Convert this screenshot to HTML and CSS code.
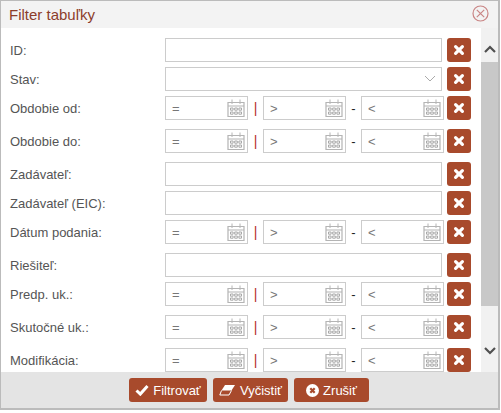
FILE: index.html
```html
<!DOCTYPE html>
<html lang="sk">
<head>
  <meta charset="UTF-8">
  <title>Filter tabuľky</title>
  <link rel="stylesheet" href="styles.css">
</head>
<body>
  <svg class="defs" width="0" height="0">
    <symbol id="ico-cal" viewBox="0 0 18 18">
      <path d="M1 3.5h16v14H1z M1 7h16" fill="none" stroke="#b4b4b4" stroke-width="1.2"/>
      <path d="M5 0.5v4.5 M13 0.5v4.5" fill="none" stroke="#b4b4b4" stroke-width="1"/>
      <path d="M3.5 9h2.6v2.2H3.5z M7.7 9h2.6v2.2H7.7z M11.9 9h2.6v2.2h-2.6z M3.5 13h2.6v2.2H3.5z M7.7 13h2.6v2.2H7.7z M11.9 13h2.6v2.2h-2.6z" fill="none" stroke="#a8a8a8" stroke-width="1"/>
    </symbol>
    <symbol id="ico-x" viewBox="0 0 12 12">
      <path d="M2.6 2.6l6.8 6.8M9.4 2.6L2.6 9.4" fill="none" stroke="#fff" stroke-width="3.2" stroke-linecap="round"/>
    </symbol>
  </svg>

  <div class="dialog">
    <div class="dialog-title">
      <span>Filter tabuľky</span>
      <svg class="close-ico" width="17" height="17" viewBox="0 0 17 17">
        <circle cx="8.5" cy="8.5" r="7.5" fill="none" stroke="#c98585" stroke-width="1.2"/>
        <path d="M4.8 4.8l7.4 7.4M12.2 4.8l-7.4 7.4" stroke="#c98585" stroke-width="1.2"/>
      </svg>
    </div>

    <div class="dialog-body">
      <div class="form">
        <div class="row">
          <label>ID:</label>
          <input class="field" type="text">
          <button class="clear"><svg width="12" height="12"><use href="#ico-x"/></svg></button>
        </div>
        <div class="row">
          <label>Stav:</label>
          <div class="select-wrap">
            <select class="field"></select>
            <svg class="chevron" width="12" height="7" viewBox="0 0 12 7"><path d="M1 1l5 5 5-5" fill="none" stroke="#aaa" stroke-width="1"/></svg>
          </div>
          <button class="clear"><svg width="12" height="12"><use href="#ico-x"/></svg></button>
        </div>
        <div class="row row-date">
          <label>Obdobie od:</label>
          <div class="dates">
            <div class="date"><input class="field" type="text" value="="><svg width="18" height="18"><use href="#ico-cal"/></svg></div>
            <span class="bar">|</span>
            <div class="date"><input class="field" type="text" value="&gt;"><svg width="18" height="18"><use href="#ico-cal"/></svg></div>
            <span class="dash">-</span>
            <div class="date"><input class="field" type="text" value="&lt;"><svg width="18" height="18"><use href="#ico-cal"/></svg></div>
          </div>
          <button class="clear"><svg width="12" height="12"><use href="#ico-x"/></svg></button>
        </div>
        <div class="row row-date">
          <label>Obdobie do:</label>
          <div class="dates">
            <div class="date"><input class="field" type="text" value="="><svg width="18" height="18"><use href="#ico-cal"/></svg></div>
            <span class="bar">|</span>
            <div class="date"><input class="field" type="text" value="&gt;"><svg width="18" height="18"><use href="#ico-cal"/></svg></div>
            <span class="dash">-</span>
            <div class="date"><input class="field" type="text" value="&lt;"><svg width="18" height="18"><use href="#ico-cal"/></svg></div>
          </div>
          <button class="clear"><svg width="12" height="12"><use href="#ico-x"/></svg></button>
        </div>
        <div class="row">
          <label>Zadávateľ:</label>
          <input class="field" type="text">
          <button class="clear"><svg width="12" height="12"><use href="#ico-x"/></svg></button>
        </div>
        <div class="row">
          <label>Zadávateľ (EIC):</label>
          <input class="field" type="text">
          <button class="clear"><svg width="12" height="12"><use href="#ico-x"/></svg></button>
        </div>
        <div class="row row-date">
          <label>Dátum podania:</label>
          <div class="dates">
            <div class="date"><input class="field" type="text" value="="><svg width="18" height="18"><use href="#ico-cal"/></svg></div>
            <span class="bar">|</span>
            <div class="date"><input class="field" type="text" value="&gt;"><svg width="18" height="18"><use href="#ico-cal"/></svg></div>
            <span class="dash">-</span>
            <div class="date"><input class="field" type="text" value="&lt;"><svg width="18" height="18"><use href="#ico-cal"/></svg></div>
          </div>
          <button class="clear"><svg width="12" height="12"><use href="#ico-x"/></svg></button>
        </div>
        <div class="row">
          <label>Riešiteľ:</label>
          <input class="field" type="text">
          <button class="clear"><svg width="12" height="12"><use href="#ico-x"/></svg></button>
        </div>
        <div class="row row-date">
          <label>Predp. uk.:</label>
          <div class="dates">
            <div class="date"><input class="field" type="text" value="="><svg width="18" height="18"><use href="#ico-cal"/></svg></div>
            <span class="bar">|</span>
            <div class="date"><input class="field" type="text" value="&gt;"><svg width="18" height="18"><use href="#ico-cal"/></svg></div>
            <span class="dash">-</span>
            <div class="date"><input class="field" type="text" value="&lt;"><svg width="18" height="18"><use href="#ico-cal"/></svg></div>
          </div>
          <button class="clear"><svg width="12" height="12"><use href="#ico-x"/></svg></button>
        </div>
        <div class="row row-date">
          <label>Skutočné uk.:</label>
          <div class="dates">
            <div class="date"><input class="field" type="text" value="="><svg width="18" height="18"><use href="#ico-cal"/></svg></div>
            <span class="bar">|</span>
            <div class="date"><input class="field" type="text" value="&gt;"><svg width="18" height="18"><use href="#ico-cal"/></svg></div>
            <span class="dash">-</span>
            <div class="date"><input class="field" type="text" value="&lt;"><svg width="18" height="18"><use href="#ico-cal"/></svg></div>
          </div>
          <button class="clear"><svg width="12" height="12"><use href="#ico-x"/></svg></button>
        </div>
        <div class="row row-date">
          <label>Modifikácia:</label>
          <div class="dates">
            <div class="date"><input class="field" type="text" value="="><svg width="18" height="18"><use href="#ico-cal"/></svg></div>
            <span class="bar">|</span>
            <div class="date"><input class="field" type="text" value="&gt;"><svg width="18" height="18"><use href="#ico-cal"/></svg></div>
            <span class="dash">-</span>
            <div class="date"><input class="field" type="text" value="&lt;"><svg width="18" height="18"><use href="#ico-cal"/></svg></div>
          </div>
          <button class="clear"><svg width="12" height="12"><use href="#ico-x"/></svg></button>
        </div>
      </div>

      <div class="scrollbar">
        <svg class="arrow" width="12" height="8" viewBox="0 0 12 8"><path d="M1 7l5-5 5 5" fill="none" stroke="#505050" stroke-width="2.2"/></svg>
        <div class="track"><div class="thumb"></div></div>
        <svg class="arrow" width="12" height="8" viewBox="0 0 12 8"><path d="M1 1l5 5 5-5" fill="none" stroke="#505050" stroke-width="2.2"/></svg>
      </div>
    </div>

    <div class="dialog-foot">
      <button class="action">
        <svg width="14" height="12" viewBox="0 0 14 12"><path d="M1.5 6.5l3.8 3.6L12.5 2" fill="none" stroke="#fff" stroke-width="3"/></svg>
        Filtrovať
      </button>
      <button class="action">
        <svg width="17" height="12" viewBox="0 0 17 12"><path d="M6 1H16L12.5 6.5H2.5z" fill="#fff"/><path d="M2.5 6.5L0.8 11H10L12.5 6.5" fill="none" stroke="#fff" stroke-width="1"/></svg>
        Vyčistiť
      </button>
      <button class="action">
        <svg width="13" height="13" viewBox="0 0 13 13"><circle cx="6.5" cy="6.5" r="6.5" fill="#fff"/><path d="M4.3 4.3l4.4 4.4M8.7 4.3L4.3 8.7" stroke="#a84a2c" stroke-width="2.2"/></svg>
        Zrušiť
      </button>
    </div>
  </div>
</body>
</html>
```

FILE: styles.css
```css
* {
  box-sizing: border-box;
}

body {
  margin: 0;
  background: #fff;
  font-family: "Liberation Sans", Arial, sans-serif;
  font-size: 13px;
  color: #555;
}

.defs {
  display: block;
  height: 0;
}

.dialog {
  width: 500px;
  height: 410px;
  display: flex;
  flex-direction: column;
  border: 1px solid #bbb;
  border-right-width: 2px;
  border-bottom-width: 2px;
}

.dialog-title {
  height: 27px;
  flex: none;
  display: flex;
  align-items: center;
  justify-content: space-between;
  padding: 0 9px 0 8px;
  background: #f3f3f3;
  font-size: 15px;
  color: #8c3d2b;
}

.close-ico {
  margin-top: -3px;
}

.dialog-body {
  height: 344px;
  flex: none;
  display: flex;
  overflow: hidden;
  background: #fff;
}

.form {
  flex: 1;
  padding: 10px 9px 0 9px;
}

.row {
  display: flex;
  align-items: center;
  margin-bottom: 5px;
}

.row-date {
  margin-bottom: 9px;
}

.row label {
  width: 155px;
  flex: none;
}

.field {
  width: 100%;
  height: 24px;
  padding: 0 6px;
  border: 1px solid #ccc;
  background: #fff;
  font-family: inherit;
  font-size: 13px;
  color: #777;
  outline: none;
  appearance: none;
}

.row > .field,
.select-wrap {
  width: 277px;
  flex: none;
}

.select-wrap,
.date {
  position: relative;
  height: 24px;
}

.chevron {
  position: absolute;
  right: 6px;
  top: 8px;
}

.dates {
  width: 277px;
  flex: none;
  display: flex;
  align-items: center;
}

.date {
  width: 83px;
  flex: none;
}

.date svg {
  position: absolute;
  right: 3px;
  top: 3px;
}

.bar,
.dash {
  width: 15px;
  flex: none;
  text-align: center;
}

.bar {
  color: #b5302a;
  font-size: 14px;
}

.dash {
  color: #222;
}

.clear {
  width: 24px;
  height: 24px;
  flex: none;
  margin-left: 5px;
  padding: 0;
  display: flex;
  align-items: center;
  justify-content: center;
  border: none;
  border-radius: 3px;
  background: #a84a2c;
}

.scrollbar {
  width: 17px;
  flex: none;
  display: flex;
  flex-direction: column;
  align-items: center;
  background: #f1f1f1;
}

.arrow {
  flex: none;
  margin: 17px 0 9px;
}

.arrow:last-child {
  margin: 9px 0 17px;
}

.track {
  flex: 1;
  width: 100%;
}

.thumb {
  height: 244px;
  background: #c8c8c8;
}

.dialog-foot {
  flex: 1;
  display: flex;
  justify-content: center;
  align-items: center;
  gap: 6px;
  padding-right: 1px;
  background: #e4e4e4;
}

.action {
  width: 75px;
  height: 24px;
  padding: 0;
  display: flex;
  align-items: center;
  justify-content: center;
  gap: 4px;
  border: none;
  border-radius: 3px;
  background: #a84a2c;
  color: #fff;
  font-family: inherit;
  font-size: 13px;
}

.action:first-child {
  width: 78px;
}
```
